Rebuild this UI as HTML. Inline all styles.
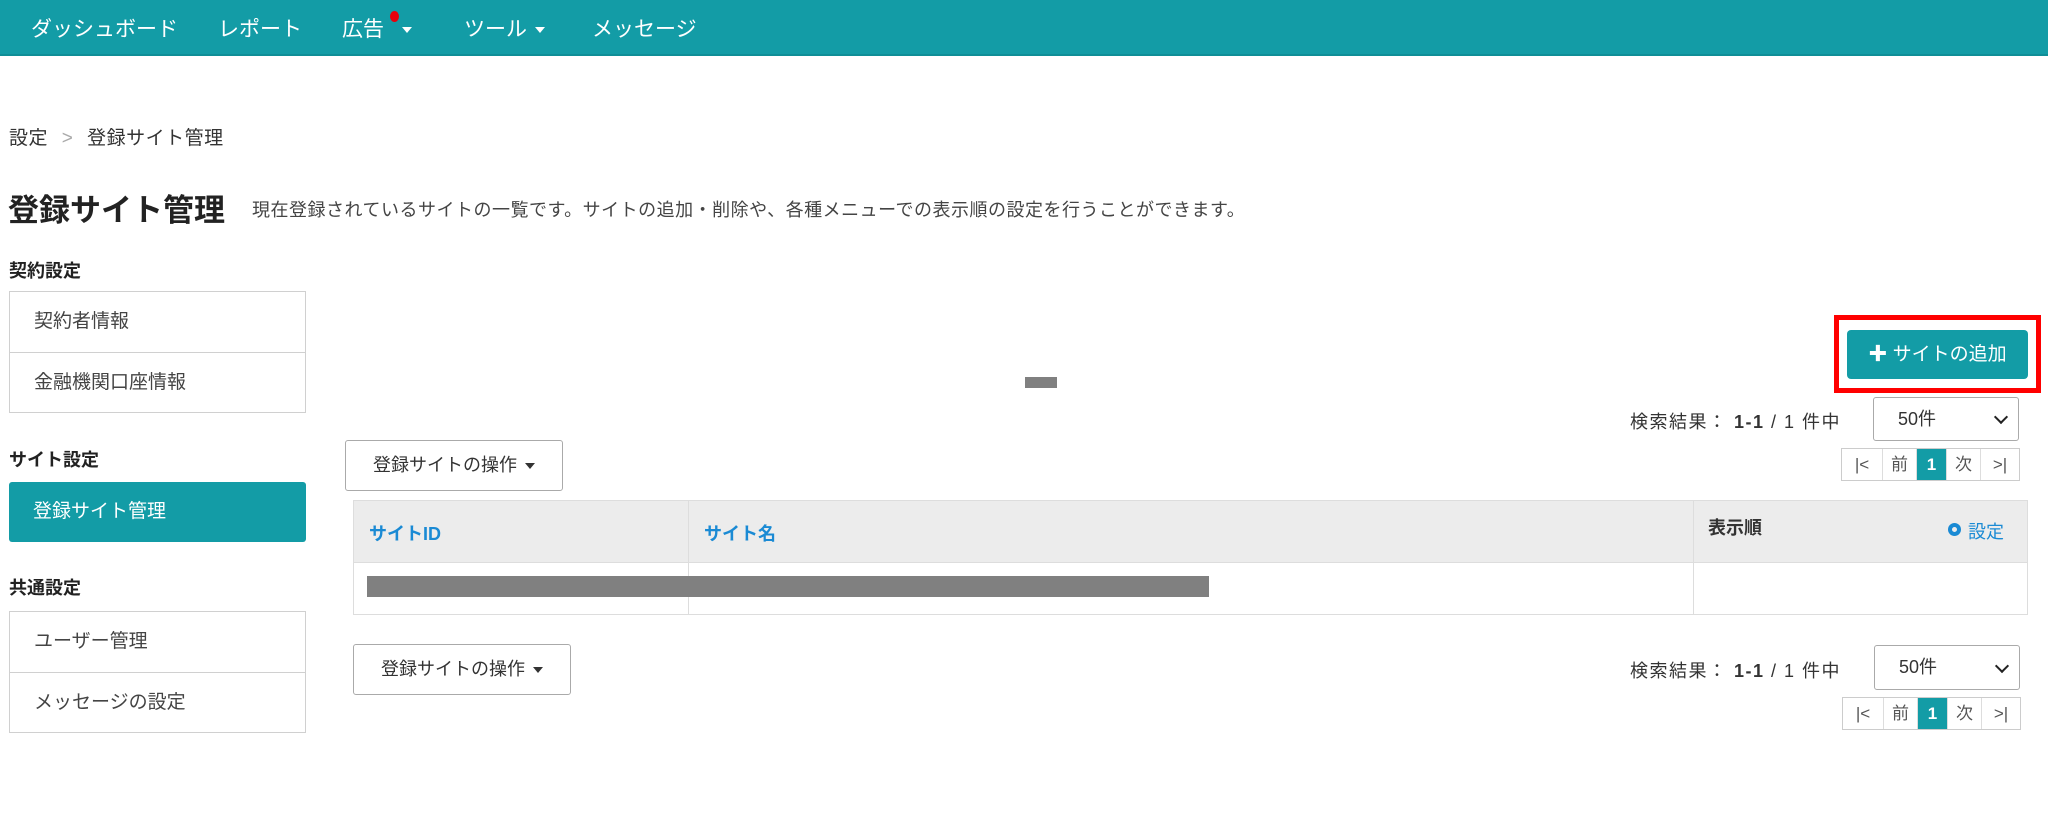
<!DOCTYPE html>
<html><head><meta charset="utf-8"><style>
*{box-sizing:border-box;margin:0;padding:0}
body{width:2048px;height:822px;background:#fff;font-family:"Liberation Sans","Noto Sans CJK JP",sans-serif;color:#333;position:relative;overflow:hidden}
.a{position:absolute;white-space:nowrap}
.nav{position:absolute;left:0;top:0;width:2048px;height:56px;background:#139ca6;border-bottom:2px solid #0f8e97}
.nav span{position:absolute;top:13px;color:#fff;font-size:21px}
.car{display:inline-block;width:0;height:0;border-left:5px solid transparent;border-right:5px solid transparent;border-top:6px solid currentColor;vertical-align:middle;margin-left:8px}
.box{position:absolute;left:9px;width:297px;border:1px solid #d0d0d0;background:#fff}
.box div{height:60px;line-height:60px;padding-left:24px;font-size:19px;color:#444}
.box div+div{border-top:1px solid #d0d0d0}
.sel{position:absolute;border:1px solid #aaa;border-radius:3px;font-size:18px;padding-left:24px;color:#333}
.sel:after{content:"";position:absolute;right:12px;top:50%;width:8px;height:8px;border-right:2.5px solid #222;border-bottom:2.5px solid #222;transform:translateY(-70%) rotate(45deg)}
.pg{position:absolute;display:flex;border:1px solid #ccc;height:33px}
.pg div{height:31px;line-height:31px;text-align:center;font-size:17px;color:#555;border-left:1px solid #ddd}
.pg div:first-child{border-left:none}
.pg .on{background:#139ca6;color:#fff;font-weight:bold}
.dd{position:absolute;border:1px solid #aaa;border-radius:3px;font-size:18px;text-align:center;color:#333;background:#fff}
.res{font-size:18px;letter-spacing:1.5px;color:#333}
</style></head><body>
<div class="nav">
<span style="left:31px">ダッシュボード</span>
<span style="left:218px">レポート</span>
<span style="left:342px">広告<i class="car" style="margin-left:18px"></i></span>
<div class="a" style="left:390px;top:11px;width:9px;height:11px;border-radius:50%;background:#e8000b"></div>
<span style="left:464px">ツール<i class="car"></i></span>
<span style="left:592px">メッセージ</span>
</div>
<div class="a" style="left:9px;top:123px;font-size:19px;color:#333;letter-spacing:0.5px">設定 <span style="color:#aaa;margin:0 8px">&gt;</span> 登録サイト管理</div>
<div class="a" style="left:8px;top:185px;font-size:31px;font-weight:bold;color:#222">登録サイト管理</div>
<div class="a" style="left:252px;top:196px;font-size:18px;letter-spacing:0.5px;color:#444">現在登録されているサイトの一覧です。サイトの追加・削除や、各種メニューでの表示順の設定を行うことができます。</div>
<div class="a" style="left:9px;top:257px;font-size:18px;font-weight:bold;color:#222">契約設定</div>
<div class="box" style="top:291px"><div>契約者情報</div><div>金融機関口座情報</div></div>
<div class="a" style="left:9px;top:446px;font-size:18px;font-weight:bold;color:#222">サイト設定</div>
<div class="a" style="left:9px;top:482px;width:297px;height:60px;background:#139ca6;border-radius:3px;color:#fff;font-size:19px;line-height:60px;padding-left:24px">登録サイト管理</div>
<div class="a" style="left:9px;top:574px;font-size:18px;font-weight:bold;color:#222">共通設定</div>
<div class="box" style="top:611px"><div>ユーザー管理</div><div>メッセージの設定</div></div>

<div class="a" style="left:1025px;top:377px;width:32px;height:11px;background:#808080"></div>
<div class="a" style="left:1834px;top:315px;width:207px;height:78px;border:5px solid #f00"></div>
<div class="a" style="left:1847px;top:330px;width:181px;height:49px;background:#139ca6;border-radius:4px;color:#fff;font-size:19px;line-height:49px;text-align:center">✚ サイトの追加</div>

<div class="a res" style="left:1630px;top:408px">検索結果： <b>1-1</b> / 1 件中</div>
<div class="sel" style="left:1873px;top:397px;width:146px;height:44px;line-height:42px">50件</div>
<div class="pg" style="left:1841px;top:448px"><div style="width:40px">|&lt;</div><div style="width:34px">前</div><div class="on" style="width:30px">1</div><div style="width:34px">次</div><div style="width:39px">&gt;|</div></div>

<div class="dd" style="left:345px;top:440px;width:218px;height:51px;line-height:49px">登録サイトの操作<i class="car"></i></div>

<div class="a" style="left:353px;top:500px;width:1675px;height:115px;border:1px solid #ddd">
 <div class="a" style="left:0;top:0;width:1673px;height:62px;background:#ececec;border-bottom:1px solid #ddd"></div>
 <div class="a" style="left:334px;top:0;width:1px;height:113px;background:#ddd"></div>
 <div class="a" style="left:1339px;top:0;width:1px;height:113px;background:#ddd"></div>
 <div class="a" style="left:15px;top:19px;font-size:18px;font-weight:bold;color:#1a8ad4">サイトID</div>
 <div class="a" style="left:350px;top:19px;font-size:18px;font-weight:bold;color:#1a8ad4">サイト名</div>
 <div class="a" style="left:1354px;top:13px;font-size:18px;font-weight:bold;color:#333">表示順</div>
 <div class="a" style="left:1594px;top:22px;width:13px;height:13px;border-radius:50%;border:4px solid #1a8ad4"></div>
 <div class="a" style="left:1614px;top:17px;font-size:18px;color:#1a8ad4">設定</div>
 <div class="a" style="left:13px;top:75px;width:842px;height:21px;background:#808080"></div>
</div>

<div class="dd" style="left:353px;top:644px;width:218px;height:51px;line-height:49px">登録サイトの操作<i class="car"></i></div>
<div class="a res" style="left:1630px;top:657px">検索結果： <b>1-1</b> / 1 件中</div>
<div class="sel" style="left:1874px;top:645px;width:146px;height:45px;line-height:43px">50件</div>
<div class="pg" style="left:1842px;top:697px"><div style="width:40px">|&lt;</div><div style="width:34px">前</div><div class="on" style="width:30px">1</div><div style="width:34px">次</div><div style="width:39px">&gt;|</div></div>
</body></html>
